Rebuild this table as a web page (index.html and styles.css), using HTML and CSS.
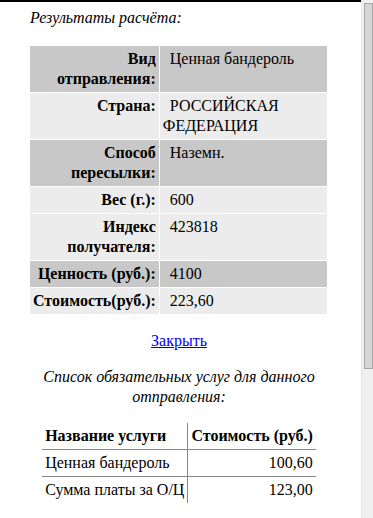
FILE: index.html
```html
<!DOCTYPE html>
<html lang="ru">
<head>
<meta charset="utf-8">
<title>Результаты расчёта</title>
<link rel="stylesheet" href="styles.css">
</head>
<body>
<div class="frame">
  <main class="page">
    <div class="content">
      <p class="title">Результаты расчёта:</p>
      <table class="result">
        <tr class="dark"><th>Вид<br>отправления:</th><td>Ценная бандероль</td></tr>
        <tr class="light"><th>Страна:</th><td>РОССИЙСКАЯ<br>ФЕДЕРАЦИЯ</td></tr>
        <tr class="dark"><th>Способ<br>пересылки:</th><td>Наземн.</td></tr>
        <tr class="light"><th>Вес (г.):</th><td>600</td></tr>
        <tr class="light"><th>Индекс<br>получателя:</th><td>423818</td></tr>
        <tr class="dark"><th>Ценность (руб.):</th><td>4100</td></tr>
        <tr class="light"><th>Стоимость(руб.):</th><td>223,60</td></tr>
      </table>
      <p class="close"><a href="#">Закрыть</a></p>
      <p class="subtitle">Список обязательных услуг для данного отправления:</p>
      <table class="services">
        <tr><th>Название услуги</th><th>Стоимость (руб.)</th></tr>
        <tr><td>Ценная бандероль</td><td class="num">100,60</td></tr>
        <tr><td>Сумма платы за О/Ц</td><td class="num">123,00</td></tr>
      </table>
    </div>
  </main>
  <div class="scrollbar"><div class="thumb"></div></div>
</div>
</body>
</html>
```
FILE: styles.css
```css
html, body {
  margin: 0;
  padding: 0;
  background: #fff;
}
body {
  font-family: "Liberation Serif", "Times New Roman", serif;
  font-size: 16px;
  line-height: 20px;
  color: #000;
}
.frame {
  display: flex;
  height: 518px;
  overflow: hidden;
}
.page {
  flex: 1;
  border-top: 2px solid #000;
}
.content {
  width: 298px;
  margin-left: 30px;
}
.title {
  font-style: italic;
  margin: 6px 0 18px;
}
.result {
  border-collapse: separate;
  border-spacing: 1px;
  margin-left: -1px;
  margin-top: -1px;
}
.result th, .result td {
  padding: 3px;
  vertical-align: top;
  white-space: nowrap;
}
.result th {
  width: 121px;
  text-align: right;
  font-weight: bold;
}
.result td {
  width: 164px;
  text-align: left;
  text-indent: 7px;
}
.result tr.dark th, .result tr.dark td { background: #c8c8c8; }
.result tr.light th, .result tr.light td { background: #ececec; }
.close {
  text-align: center;
  margin: 16px 0;
}
.close a {
  color: #0000ee;
  text-decoration: underline;
}
.subtitle {
  font-style: italic;
  text-align: center;
  margin: 16px 0;
}
.services {
  border-collapse: collapse;
  margin: 0 auto;
}
.services th, .services td {
  padding: 3px;
  text-align: left;
  white-space: nowrap;
}
.services th { font-weight: bold; }
.services tr:first-child th, .services tr:nth-child(2) td {
  border-bottom: 1px solid #888;
}
.services th:first-child, .services td:first-child {
  border-right: 1px solid #888;
}
.services td.num { text-align: right; }
.scrollbar {
  width: 12px;
  flex: none;
  background: #f0f0f0;
  border-left: 1px solid #e6e6e6;
  padding: 3px 0 0 2px;
  box-sizing: border-box;
}
.thumb {
  height: 366px;
  background: #d6d6d6;
  border: 1px solid #a8a8a8;
  box-sizing: border-box;
}
```
